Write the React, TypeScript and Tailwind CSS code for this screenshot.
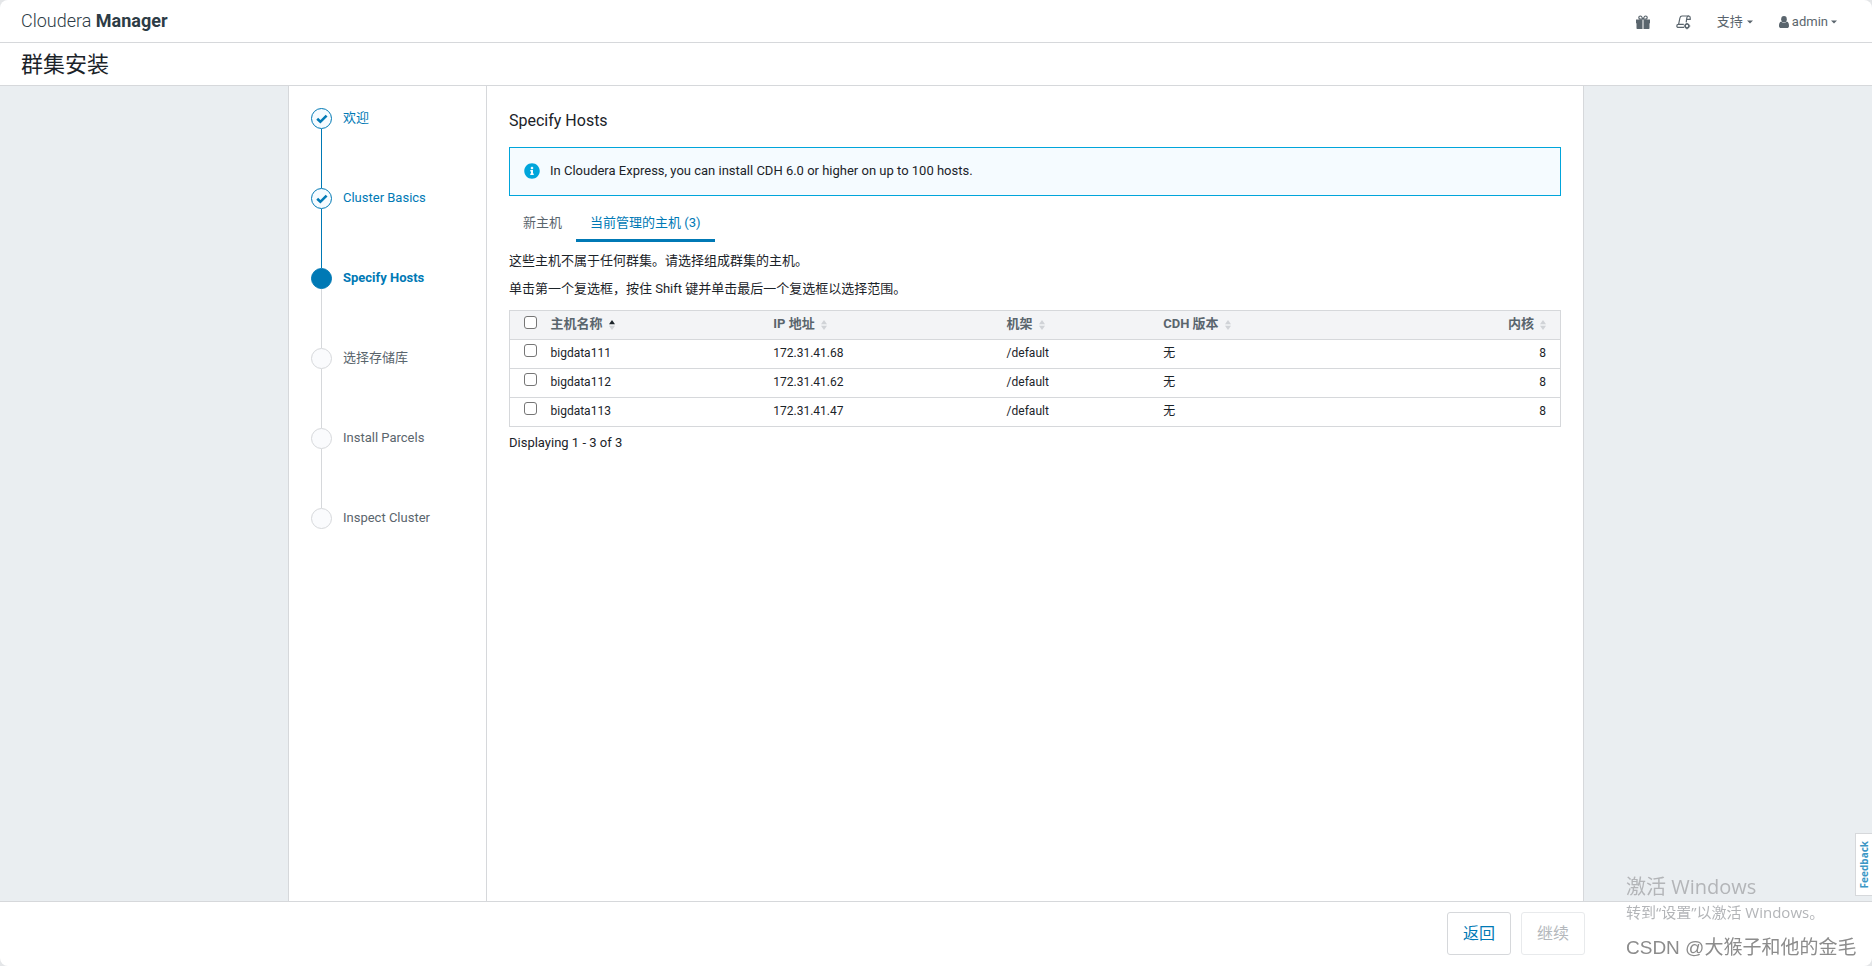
import { useState } from "react";
import { FaInfoCircle } from "react-icons/fa";

interface Host {
  name: string;
  ip: string;
  rack: string;
  version: string;
  cores: number;
}

interface Step {
  label: string;
  state: "done" | "current" | "todo";
}

const hosts: Host[] = [
  { name: "bigdata111", ip: "172.31.41.68", rack: "/default", version: "无", cores: 8 },
  { name: "bigdata112", ip: "172.31.41.62", rack: "/default", version: "无", cores: 8 },
  { name: "bigdata113", ip: "172.31.41.47", rack: "/default", version: "无", cores: 8 },
];

const steps: Step[] = [
  { label: "欢迎", state: "done" },
  { label: "Cluster Basics", state: "done" },
  { label: "Specify Hosts", state: "current" },
  { label: "选择存储库", state: "todo" },
  { label: "Install Parcels", state: "todo" },
  { label: "Inspect Cluster", state: "todo" },
];

const circleClass = {
  done: "border-[#0079b5] bg-[#f5fbff] text-[#0079b5]",
  current: "border-[#0079b5] bg-[#0079b5]",
  todo: "border-[#d6d8db] bg-[#fafbfd]",
};

const labelClass = {
  done: "text-[#0079b5]",
  current: "font-bold text-[#0079b5]",
  todo: "text-[#5a656d]",
};

function GiftIcon() {
  return (
    <svg width="14" height="14" viewBox="0 0 14 14" fill="currentColor">
      <path d="M0 4.6h6.5V14H1.2a.7.7 0 0 1-.7-.7V8.2H0zM7.5 4.6H14v3.6h-.5v5.1a.7.7 0 0 1-.7.7H7.5z" />
      <g fill="none" stroke="currentColor" strokeWidth="1.2">
        <path d="M6.8 4.4C6.3 2.4 5.5 1 4.4 1a1.5 1.5 0 0 0 0 3.2h2.4" />
        <path d="M7.2 4.4C7.7 2.4 8.5 1 9.6 1a1.5 1.5 0 0 1 0 3.2H7.2" />
      </g>
    </svg>
  );
}

function ScrollIcon() {
  return (
    <svg width="15" height="15" viewBox="0 0 15 15" fill="none" stroke="currentColor" strokeWidth="1.2">
      <path d="M2.6 9.4 3.9 3C4.2 1.6 4.8 1 6 1h7" />
      <path d="M12.6 1c-1.1 0-1.6.8-1.8 1.8l-.6 4.6M12.6 1c1.2 0 1.6.8 1.6 1.8v1.6h-3.4" />
      <path d="M8 12.4H2.4c-1 0-1.6-.6-1.6-1.5S1.4 9.4 2.4 9.4h5.4" />
      <circle cx="11" cy="11" r="1.9" strokeWidth="1.5" />
      <path d="M11 7.9v1M11 13.1v1.2M7.8 11h1M13.1 11h1.2" />
    </svg>
  );
}

function UserIcon() {
  return (
    <svg width="10" height="12" viewBox="0 0 10 12" fill="currentColor">
      <ellipse cx="5" cy="3.2" rx="2.8" ry="3.2" />
      <path d="M2.3 5.6C0.6 5.9 0 7.700 0 9.900C0 11.200 0.900 12 2 12H8C9.100 12 10 11.200 10 9.900C10 7.700 9.400 5.900 7.700 5.600C7 6.500 6.100 7 5 7C3.900 7 3 6.500 2.300 5.600Z" />
    </svg>
  );
}

function Caret() {
  return (
    <svg width="6" height="4" viewBox="0 0 6 4" fill="currentColor" aria-hidden="true">
      <path d="M0 .5h6l-3 3z" />
    </svg>
  );
}

function CheckIcon() {
  return (
    <svg width="12" height="10" viewBox="0 0 12 10" fill="none" stroke="currentColor" strokeWidth="2.6">
      <path d="m1.2 4.7 3.2 3.1 6.2-6.2" />
    </svg>
  );
}

function SortIcon({ active }: { active?: boolean }) {
  return (
    <svg className="ml-1.5 inline-block" width="6" height="10" viewBox="0 0 6 10" aria-hidden="true">
      <path d="M0 4.2 3 0l3 4.2z" fill={active ? "#1b2329" : "#d0d3d7"} />
      <path d="M0 5.8h6L3 10z" fill="#d0d3d7" />
    </svg>
  );
}

export default function App() {
  const [selected, setSelected] = useState<string[]>([]);
  const [tab, setTab] = useState<"new" | "managed">("managed");

  const toggle = (name: string) =>
    setSelected((s) => (s.includes(name) ? s.filter((n) => n !== name) : [...s, name]));

  const tabClass = (active: boolean) =>
    active
      ? "border-b-3 border-[#0079b5] px-3.5 pt-2.5 pb-1.5 text-[#0079b5]"
      : "border-b-3 border-transparent px-3.5 pt-2.5 pb-1.5 text-[#5a656d]";

  const checkboxClass =
    "block size-[13px] appearance-none rounded-[3px] border border-[#767676] bg-white checked:bg-[#0079b5]";

  return (
    <div className="bg-[#e4e6e8]">
      <div className="flex min-h-screen flex-col overflow-hidden rounded-lg bg-white font-[Roboto,'Noto_Sans_CJK_SC',sans-serif] text-[13px] leading-5 text-[#1b2329]">
        <header className="flex h-[43px] items-center justify-between border-b border-[#d6d8db] pr-[35px] pl-[21px]">
          <a href="#" className="text-lg leading-6 text-[#2d3c46]">
            <span className="font-light">Cloudera</span> <span className="font-bold">Manager</span>
          </a>
          <nav className="flex items-center pt-0.5 text-[#5a656d]">
            <a href="#" aria-label="What's new" className="mr-[26px]">
              <GiftIcon />
            </a>
            <a href="#" aria-label="Recent commands" className="mr-[26px]">
              <ScrollIcon />
            </a>
            <button className="mr-[26px] flex items-center gap-1">
              支持
              <Caret />
            </button>
            <button className="flex items-center gap-[3px]">
              <UserIcon />
              admin
              <Caret />
            </button>
          </nav>
        </header>

        <div className="flex h-[43px] items-center border-b border-[#d6d8db] px-[21px] pt-0.5">
          <h1 className="text-[22px] leading-7">群集安装</h1>
        </div>

        <div className="flex grow bg-[#eaeef1]">
          <div className="mx-auto flex w-full max-w-[1296px] border-x border-[#d6d8db] bg-white">
            <aside className="w-[198px] shrink-0 border-r border-[#d6d8db] px-[22px] pt-[22px]">
              <ol>
                {steps.map((step, i) => (
                  <li key={step.label} className="flex gap-[11px]">
                    <div className="flex flex-col items-center">
                      <span
                        className={`flex size-[21px] items-center justify-center rounded-full border ${circleClass[step.state]}`}
                      >
                        {step.state === "done" && <CheckIcon />}
                      </span>
                      {i < steps.length - 1 && (
                        <span
                          className={`h-[59px] w-px ${step.state === "done" ? "bg-[#0079b5]" : "bg-[#d6d8db]"}`}
                        />
                      )}
                    </div>
                    <span className={labelClass[step.state]}>{step.label}</span>
                  </li>
                ))}
              </ol>
            </aside>

            <main className="grow px-[22px] pt-[23px]">
              <h2 className="text-base leading-6">Specify Hosts</h2>

              <div className="mt-3.5 flex h-[49px] items-center gap-2.5 border border-[#00a5db] bg-[#f5fbff] px-3.5 pb-0.5">
                <FaInfoCircle size={16} className="text-[#00a5db]" />
                In Cloudera Express, you can install CDH 6.0 or higher on up to 100 hosts.
              </div>

              <div className="mt-[7px] flex" role="tablist">
                <button
                  role="tab"
                  aria-selected={tab === "new"}
                  onClick={() => setTab("new")}
                  className={tabClass(tab === "new")}
                >
                  新主机
                </button>
                <button
                  role="tab"
                  aria-selected={tab === "managed"}
                  onClick={() => setTab("managed")}
                  className={tabClass(tab === "managed")}
                >
                  当前管理的主机 (3)
                </button>
              </div>

              <p className="mt-[9px]">这些主机不属于任何群集。请选择组成群集的主机。</p>
              <p className="mt-2">单击第一个复选框，按住 Shift 键并单击最后一个复选框以选择范围。</p>

              <table className="mt-[11px] w-full table-fixed border-collapse border border-[#d6d8db] text-left text-xs">
                <thead className="bg-[#f3f4f6] text-[13px] text-[#5a656d]">
                  <tr className="h-[29px] border-b border-[#d6d8db]">
                    <th className="w-[27px] pb-1.5 pl-3.5">
                      <input
                        type="checkbox"
                        aria-label="全选"
                        className={checkboxClass}
                        checked={selected.length === hosts.length}
                        onChange={(e) => setSelected(e.target.checked ? hosts.map((h) => h.name) : [])}
                      />
                    </th>
                    <th className="w-[21.2%] pb-0.5 pl-3.5">
                      主机名称
                      <SortIcon active />
                    </th>
                    <th className="w-[22.2%] pb-0.5 pl-3.5">
                      IP 地址
                      <SortIcon />
                    </th>
                    <th className="w-[14.9%] pb-0.5 pl-3.5">
                      机架
                      <SortIcon />
                    </th>
                    <th className="pb-0.5 pl-3.5">
                      CDH 版本
                      <SortIcon />
                    </th>
                    <th className="w-[10%] pr-3.5 pb-0.5 text-right">
                      内核
                      <SortIcon />
                    </th>
                  </tr>
                </thead>
                <tbody>
                  {hosts.map((h) => (
                    <tr key={h.name} className="h-[29px] border-b border-[#d6d8db]">
                      <td className="pb-2 pl-3.5">
                        <input
                          type="checkbox"
                          aria-label={h.name}
                          className={checkboxClass}
                          checked={selected.includes(h.name)}
                          onChange={() => toggle(h.name)}
                        />
                      </td>
                      <td className="pb-0.5 pl-3.5">{h.name}</td>
                      <td className="pb-0.5 pl-3.5">{h.ip}</td>
                      <td className="pb-0.5 pl-3.5">{h.rack}</td>
                      <td className="pb-0.5 pl-3.5">{h.version}</td>
                      <td className="pr-3.5 pb-0.5 text-right">{h.cores}</td>
                    </tr>
                  ))}
                </tbody>
              </table>

              <p className="mt-1.5">Displaying 1 - 3 of 3</p>
            </main>
          </div>
        </div>

        <footer className="flex h-[65px] items-start justify-end gap-2.5 border-t border-[#d6d8db] pt-2.5 pr-[287px] text-base">
          <button className="h-[43px] rounded-[3px] border border-[#d6d8db] px-[15px] text-[#0079b5]">返回</button>
          <button disabled className="h-[43px] rounded-[3px] border border-[#e8eaec] px-[15px] text-[#b4b8bc]">
            继续
          </button>
        </footer>
      </div>

      <button className="fixed right-0 bottom-[70px] flex h-[63px] w-[17px] items-center justify-center border border-r-0 border-[#d6d8db] bg-white text-[10px] leading-4 font-bold text-[#3c97c6]">
        <span className="rotate-180 [writing-mode:vertical-rl]">Feedback</span>
      </button>

      <div className="pointer-events-none fixed right-3.5 bottom-1.5 w-[232px] font-['Open_Sans','Noto_Sans_CJK_SC',sans-serif] whitespace-nowrap text-[#b3b5b8]">
        <p className="text-xl leading-6">激活 Windows</p>
        <p className="mt-px text-[15px] leading-6">转到“设置”以激活 Windows。</p>
        <p className="mt-3 font-['Liberation_Sans','Noto_Sans_CJK_SC',sans-serif] text-[19px] leading-6 text-[#8c8c8c]">
          CSDN @大猴子和他的金毛
        </p>
      </div>
    </div>
  );
}
